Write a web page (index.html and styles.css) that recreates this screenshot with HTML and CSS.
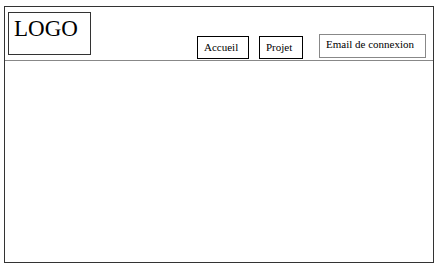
FILE: index.html
```html
<!DOCTYPE html>
<html lang="fr">
<head>
<meta charset="utf-8">
<link rel="stylesheet" href="styles.css">
</head>
<body>
<div class="page">
  <header class="header">
    <div class="logo">LOGO</div>
    <nav class="nav">
      <a class="nav-btn nav-accueil">Accueil</a>
      <a class="nav-btn nav-projet">Projet</a>
      <div class="email">Email de connexion</div>
    </nav>
  </header>
  <main class="content"></main>
</div>
</body>
</html>
```
FILE: styles.css
```css
html, body {
  margin: 0;
  padding: 0;
  background: #fff;
}
body {
  font-family: "Liberation Serif", "Times New Roman", serif;
  color: #000;
}
.page {
  margin: 6px 4px 0 4px;
  width: 428px;
  height: 255px;
  border: 1px solid #333;
  display: flex;
  flex-direction: column;
}
.header {
  display: flex;
  align-items: flex-start;
  padding: 5px 0 0 3px;
  box-sizing: border-box;
  height: 54px;
  border-bottom: 1px solid #888;
}
.logo {
  border: 1px solid #333;
  font-size: 23px;
  line-height: 1;
  padding: 4px 0 0 5px;
  width: 76px;
  height: 37px;
}
.nav {
  display: flex;
  align-items: flex-start;
  margin-left: 106px;
  margin-top: 24px;
}
.nav-btn {
  border: 1px solid #000;
  font-size: 11px;
  height: 21px;
  line-height: 21px;
  padding: 0 6px;
  margin-right: 10px;
}
.nav-accueil {
  width: 38px;
}
.nav-projet {
  width: 30px;
  margin-right: 16px;
}
.email {
  border: 1px solid #888;
  font-size: 11px;
  height: 22px;
  line-height: 18px;
  margin-top: -2px;
  padding: 0 6px;
  width: 93px;
}
.content {
  flex: 1;
}
```
